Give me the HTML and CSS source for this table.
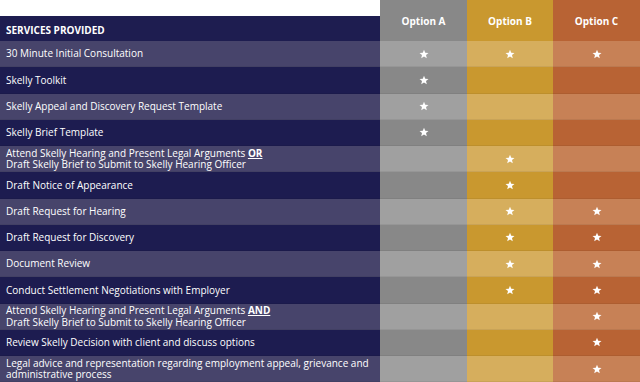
FILE: index.html
```html
<!DOCTYPE html>
<html>
<head>
<meta charset="utf-8">
<link rel="stylesheet" href="styles.css">
</head>
<body>
<svg width="0" height="0" class="defs">
  <defs>
    <symbol id="star" viewBox="0 0 24 24"><polygon points="12,1.5 15,8.8 22.8,9.4 16.8,14.5 18.7,22.2 12,18 5.3,22.2 7.2,14.5 1.2,9.4 9,8.8" fill="#fff"/></symbol>
  </defs>
</svg>
<div class="table">
  <div class="cell head-main"><span>SERVICES PROVIDED</span></div>
  <div class="cell head opt-a">Option A</div>
  <div class="cell head opt-b">Option B</div>
  <div class="cell head opt-c">Option C</div>

  <div class="cell svc light"><span>30 Minute Initial Consultation</span></div>
  <div class="cell opt-a light"><svg class="star"><use href="#star"/></svg></div>
  <div class="cell opt-b light"><svg class="star"><use href="#star"/></svg></div>
  <div class="cell opt-c light"><svg class="star"><use href="#star"/></svg></div>

  <div class="cell svc dark"><span>Skelly Toolkit</span></div>
  <div class="cell opt-a dark"><svg class="star"><use href="#star"/></svg></div>
  <div class="cell opt-b dark"></div>
  <div class="cell opt-c dark"></div>

  <div class="cell svc light"><span>Skelly Appeal and Discovery Request Template</span></div>
  <div class="cell opt-a light"><svg class="star"><use href="#star"/></svg></div>
  <div class="cell opt-b light"></div>
  <div class="cell opt-c light"></div>

  <div class="cell svc dark"><span>Skelly Brief Template</span></div>
  <div class="cell opt-a dark"><svg class="star"><use href="#star"/></svg></div>
  <div class="cell opt-b dark"></div>
  <div class="cell opt-c dark"></div>

  <div class="cell svc light"><span>Attend Skelly Hearing and Present Legal Arguments <b>OR</b><br>Draft Skelly Brief to Submit to Skelly Hearing Officer</span></div>
  <div class="cell opt-a light"></div>
  <div class="cell opt-b light"><svg class="star"><use href="#star"/></svg></div>
  <div class="cell opt-c light"></div>

  <div class="cell svc dark"><span>Draft Notice of Appearance</span></div>
  <div class="cell opt-a dark"></div>
  <div class="cell opt-b dark"><svg class="star"><use href="#star"/></svg></div>
  <div class="cell opt-c dark"></div>

  <div class="cell svc light"><span>Draft Request for Hearing</span></div>
  <div class="cell opt-a light"></div>
  <div class="cell opt-b light"><svg class="star"><use href="#star"/></svg></div>
  <div class="cell opt-c light"><svg class="star"><use href="#star"/></svg></div>

  <div class="cell svc dark"><span>Draft Request for Discovery</span></div>
  <div class="cell opt-a dark"></div>
  <div class="cell opt-b dark"><svg class="star"><use href="#star"/></svg></div>
  <div class="cell opt-c dark"><svg class="star"><use href="#star"/></svg></div>

  <div class="cell svc light"><span>Document Review</span></div>
  <div class="cell opt-a light"></div>
  <div class="cell opt-b light"><svg class="star"><use href="#star"/></svg></div>
  <div class="cell opt-c light"><svg class="star"><use href="#star"/></svg></div>

  <div class="cell svc dark"><span>Conduct Settlement Negotiations with Employer</span></div>
  <div class="cell opt-a dark"></div>
  <div class="cell opt-b dark"><svg class="star"><use href="#star"/></svg></div>
  <div class="cell opt-c dark"><svg class="star"><use href="#star"/></svg></div>

  <div class="cell svc light"><span>Attend Skelly Hearing and Present Legal Arguments <b>AND</b><br>Draft Skelly Brief to Submit to Skelly Hearing Officer</span></div>
  <div class="cell opt-a light"></div>
  <div class="cell opt-b light"></div>
  <div class="cell opt-c light"><svg class="star"><use href="#star"/></svg></div>

  <div class="cell svc dark"><span>Review Skelly Decision with client and discuss options</span></div>
  <div class="cell opt-a dark"></div>
  <div class="cell opt-b dark"></div>
  <div class="cell opt-c dark"><svg class="star"><use href="#star"/></svg></div>

  <div class="cell svc light"><span>Legal advice and representation regarding employment appeal, grievance and<br>administrative process</span></div>
  <div class="cell opt-a light"></div>
  <div class="cell opt-b light"></div>
  <div class="cell opt-c light"><svg class="star"><use href="#star"/></svg></div>
</div>
</body>
</html>
```
FILE: styles.css
```css
html, body {
  margin: 0;
  padding: 0;
  background: #fff;
  overflow: hidden;
}
.defs {
  position: absolute;
}
.table {
  display: grid;
  grid-template-columns: 380px 87px 86px 87px;
  grid-template-rows: 41px;
  grid-auto-rows: 26.25px;
  font-family: "Open Sans", "Liberation Sans", sans-serif;
  font-size: 10px;
  color: #fff;
}
.cell {
  box-sizing: border-box;
  display: flex;
  align-items: center;
  justify-content: center;
  border-bottom: 1px solid rgba(0, 0, 0, 0.06);
}
.head {
  font-weight: 700;
  font-size: 10px;
  border-bottom: none;
  padding-top: 1px;
}
.head-main {
  border-top: 16px solid #fff;
  background: #1e1d50;
  justify-content: flex-start;
  padding-left: 6px;
  padding-top: 3px;
  font-weight: 700;
  font-size: 10px;
  border-bottom: none;
}
.svc {
  justify-content: flex-start;
  padding-left: 6px;
  padding-top: 1px;
  line-height: 11.5px;
}
.svc b {
  font-weight: 700;
  text-decoration: underline;
  text-underline-offset: 1px;
}
.svc.light { background: #47446b; }
.svc.dark { background: #1d1c50; }
.opt-a { background: #888888; }
.opt-a.light { background: #a0a0a0; }
.opt-b { background: #c9982f; }
.opt-b.light { background: #d6ae5d; }
.opt-c { background: #b86334; }
.opt-c.light { background: #c78156; }
.star {
  width: 10px;
  height: 10px;
}
```
